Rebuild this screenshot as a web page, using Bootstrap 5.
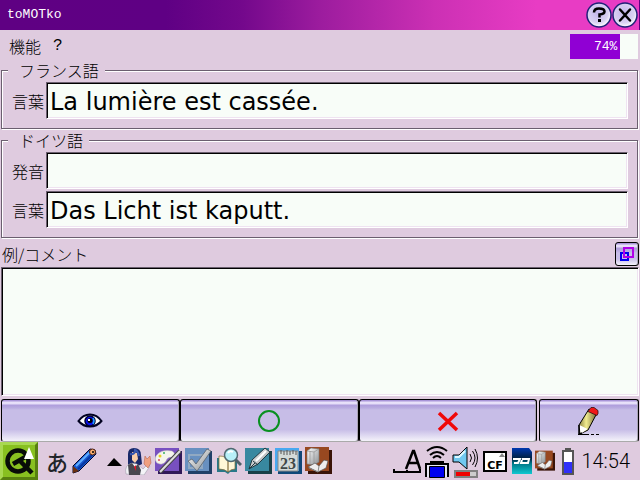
<!DOCTYPE html>
<html lang="ja">
<head>
<meta charset="utf-8">
<meta name="viewport" content="width=device-width, initial-scale=1">
<title>toMOTko</title>
<link href="https://cdn.jsdelivr.net/npm/bootstrap@5.3.0/dist/css/bootstrap.min.css" rel="stylesheet">
<style>
  :root { --paper: #dfcbdf; --field: #f8fdf8; --edge: #6b5f6f; --glow: #efe3f1; }
  body { background: var(--paper); color: #000; font: 16px/16px "Noto Sans CJK JP", sans-serif; font-weight: 300; }
  .pixel-type { font-family: "Liberation Mono", "Noto Sans CJK JP", monospace; font-size: 13px; font-weight: 400; }
  .title-strip { height: 30px; padding: 0 1px 0 7px; border-right: 1px solid #5f0083; color: #fff; background: linear-gradient(90deg, #5f0083 0%, #5f0084 26%, #74088c 38%, #9c1c9e 50%, #cc30b4 68%, #e83cc4 84%, #e83cc4 100%); }
  .round-btn { width: 26px; height: 26px; }
  .round-btn svg, .key-btn svg, .task-btn svg { display: block; }
  .menu-strip { height: 32px; padding: 0 2px 0 9px; }
  .menu-item { font-size: 16px; line-height: 16px; font-weight: 300; color: #000; }
  .score { width: 68px; height: 25px; border-radius: 0; background: var(--field); margin-top: 1px; }
  .score .progress-bar { background: #9000d4; text-align: right; padding-right: 3px; }
  .frame { border: 1px solid var(--edge); box-shadow: 1px 1px 0 #fff, inset 1px 1px 0 #fff; padding: 4px 9px 9px 6px; margin: 0 2px 3px 1px; }
  .frame legend { float: none; width: auto; margin: 0; padding: 0 6px 0 11px; font-size: 16px; line-height: 16px; background: var(--paper); }
  .frame-rows { gap: 2px; padding-left: 4px; }
  .frame label { width: 34px; }
  .sunken { background: var(--field); border: 1px solid; border-color: var(--edge) #fff #fff var(--edge); border-radius: 0; box-shadow: inset 1px 1px 0 #000, inset -1px -1px 0 var(--glow); outline: 0; color: #000; font: 24px/28px "DejaVu Sans", sans-serif; }
  .word { height: 37px; min-width: 0; padding: 2px 4px 0 3px; }
  .note-head { height: 26px; padding: 0 1px 0 2px; }
  .note { margin: 0 1px; padding: 4px; resize: none; min-height: 60px; }
  .key-btn { border: 1px solid #000; border-bottom-color: #aaa; border-radius: 3px; padding: 0; box-shadow: inset -1px 0 0 #aaa4b4; background: linear-gradient(#a894d8 0, #a894d8 1px, #e9e2fa 2px, #e4dcf8 4px, #ae9ddc 5px, #b9ace0 8px, #c7bde7 10px, #c7bde7 72%, #f4f2fa 100%); }
  .swap-btn { width: 24px; height: 24px; border-bottom-color: #000; }
  .key-row { height: 43px; padding: 0 1px; margin-top: 3px; }
  .wide-key { flex: 179 1 0; }
  .edit-key { flex: 99 1 0; margin-left: 2px; }
  .task-strip { height: 38px; padding-right: 10px; }
  .task-apps, .tray { gap: 3px; }
  .kana { font-size: 22px; line-height: 28px; font-weight: 500; width: 24px; }
  .clock { font: 300 20px/24px Roboto, sans-serif; }
</style>
</head>
<body>
<svg width="0" height="0" class="position-absolute" aria-hidden="true">
  <defs>
    <radialGradient id="orb" cx=".45" cy=".4" r=".6"><stop offset="0" stop-color="#c3b6ea"/><stop offset=".7" stop-color="#d9d2f2"/><stop offset="1" stop-color="#fff"/></radialGradient>
    <linearGradient id="steel" x2="1" y2="1"><stop offset="0" stop-color="#fff"/><stop offset="1" stop-color="#8a8f92"/></linearGradient>
    <linearGradient id="wood" x2="1"><stop offset="0" stop-color="#8a8040"/><stop offset=".4" stop-color="#f2ec90"/><stop offset="1" stop-color="#6d6530"/></linearGradient>
    <linearGradient id="sea" y2="1" x2="0"><stop offset="0" stop-color="#0038b0"/><stop offset=".4" stop-color="#002040"/><stop offset=".6" stop-color="#007888"/><stop offset="1" stop-color="#10c8d0"/></linearGradient>
    <g id="books"><path fill="#3a1408" d="M3 3h24v24H3z"/><path fill="#984820" d="M0 0h24v24H0z"/><path fill="url(#steel)" stroke="#777" stroke-width=".6" d="M2 4l4-3 8 1v13l-5 3-7-1z"/><path stroke="#999" stroke-width=".8" fill="none" d="M5 4v13M9 5v12M2 4l7 1 5-3"/><path fill="#eee" stroke="#555" stroke-width=".7" d="M3 20l7-4 4 3 5-6 4 1-2 7-8 4z"/><path stroke="#888" fill="none" d="M14 19l-1 6M4 21l9 4"/></g>
  </defs>
</svg>
<div class="d-flex flex-column min-vh-100">
  <header class="title-strip d-flex align-items-center">
    <h1 class="pixel-type m-0 me-auto">toMOTko</h1>
    <button type="button" class="btn p-0 border-0 round-btn" aria-label="Help">
      <svg width="26" height="26"><circle cx="13" cy="13" r="12" fill="url(#orb)" stroke="#202078" stroke-width="1.5"/><path d="M8 10.500Q8 6.500 13 6.500Q18.500 6.500 18.500 9.500Q18.500 12 13.500 12.500V15.500" fill="none" stroke="#000" stroke-width="2.500"/><path d="M12 17h3v3h-3z"/></svg>
    </button>
    <button type="button" class="btn p-0 border-0 round-btn" aria-label="Close">
      <svg width="26" height="26"><circle cx="13" cy="13" r="12" fill="url(#orb)" stroke="#202078" stroke-width="1.5"/><path d="M8 7.500L18 18.500M18 7.500L8 18.500" stroke="#000" stroke-width="2.500" stroke-linecap="round"/></svg>
    </button>
  </header>

  <nav class="menu-strip d-flex align-items-center">
    <button type="button" class="btn border-0 p-0 me-2 menu-item">機能</button>
    <button type="button" class="btn border-0 p-0 ms-1 pixel-type menu-item">?</button>
    <div class="progress score ms-auto" role="progressbar" aria-label="Score" aria-valuenow="74" aria-valuemin="0" aria-valuemax="100">
      <div class="progress-bar pixel-type" style="width: 74%">74%</div>
    </div>
  </nav>

  <main class="d-flex flex-column flex-grow-1">
    <fieldset class="frame">
      <legend>フランス語</legend>
      <div class="frame-rows d-flex flex-column">
        <div class="d-flex align-items-center"><label for="fr-word">言葉</label><input id="fr-word" class="sunken word flex-grow-1" type="text" value="La lumière est cassée."></div>
      </div>
    </fieldset>
    <fieldset class="frame">
      <legend>ドイツ語</legend>
      <div class="frame-rows d-flex flex-column">
        <div class="d-flex align-items-center"><label for="de-sound">発音</label><input id="de-sound" class="sunken word flex-grow-1" type="text"></div>
        <div class="d-flex align-items-center"><label for="de-word">言葉</label><input id="de-word" class="sunken word flex-grow-1" type="text" value="Das Licht ist kaputt."></div>
      </div>
    </fieldset>
    <div class="note-head d-flex align-items-center justify-content-between">
      <label for="note">例/コメント</label>
      <button type="button" class="key-btn swap-btn d-flex align-items-center justify-content-center" aria-label="Swap">
        <svg width="16" height="16" fill="none" stroke-width="2"><path stroke="#0000f0" d="M2 7h7v7H2z"/><path stroke="#b000e8" d="M5 2h9v9H5z"/></svg>
      </button>
    </div>
    <textarea id="note" class="sunken note flex-grow-1"></textarea>
    <div class="key-row d-flex">
      <button type="button" class="key-btn wide-key d-flex align-items-center justify-content-center" aria-label="Show">
        <svg width="26" height="16"><path d="M1.500 8Q6 1.500 13 1.500T24.500 8Q20 13.500 13 13.500T1.500 8z" fill="#fff" stroke="#000020" stroke-width="2"/><circle cx="13" cy="8" r="5" fill="#0810e8" stroke="#000030" stroke-width="1.500"/><path stroke="#20a0ff" stroke-width="1.500" fill="none" d="M16 5q2 3 0 6"/><circle cx="13" cy="7.500" r="2.500"/><path fill="#fff" d="M11 6h2v2h-2z"/></svg>
      </button>
      <button type="button" class="key-btn wide-key d-flex align-items-center justify-content-center" aria-label="Right">
        <svg width="24" height="24"><circle cx="12" cy="12" r="10" fill="none" stroke="#089020" stroke-width="2"/></svg>
      </button>
      <button type="button" class="key-btn wide-key d-flex align-items-center justify-content-center" aria-label="Wrong">
        <svg width="22" height="22"><path d="M2 3L20 20M20 3L2 20" stroke="#f00808" stroke-width="3.500"/></svg>
      </button>
      <button type="button" class="key-btn edit-key d-flex align-items-center justify-content-center" aria-label="Edit">
        <svg width="24" height="30"><path d="M2 19L12 3l8 4-9 17-8 4z" fill="url(#wood)" stroke="#000"/><path d="M12 4l2-2.500h3l4 3v3l-1 2-9-4z" fill="#f01818" stroke="#301010" stroke-width=".8"/><path d="M2.500 19l8 4-7 5z" fill="#fff"/><path d="M2 19v9l3-1" fill="none" stroke="#000" stroke-width="1.500"/><path d="M1 28.500h11M14 28.500h3M19 28.500h3" stroke="#000"/></svg>
      </button>
    </div>
  </main>

  <footer class="task-strip d-flex align-items-center">
    <button type="button" class="btn border-0 p-0 task-btn me-2" aria-label="Launcher">
      <svg width="38" height="38"><path fill="#88c020" d="M0 0h38v38H0z"/><path fill="#a8d850" d="M0 0h38l-3 3H3v32l-3 3z"/><path fill="#588010" d="M38 0v38H0l3-3h32V3z"/><circle cx="18" cy="19" r="10.500" fill="none" stroke="#080c08" stroke-width="4.500"/><path d="M13 22L27 14M20 19l12 12" stroke="#080c08" stroke-width="4.500"/><path d="M29 5l5 12H24z" fill="#fff"/></svg>
    </button>
    <button type="button" class="btn border-0 p-0 kana text-start">あ</button>
    <button type="button" class="btn border-0 p-0 task-btn" aria-label="Handwriting">
      <svg width="28" height="28"><path d="M3 19L20 2l5 1 1 4L9 24l-6 2z" fill="#1858d0" stroke="#000830"/><path d="M6 19L21 4" stroke="#60b0ff" stroke-width="2"/><path d="M8 22L24 6" stroke="#0838a0" stroke-width="2"/><path d="M3 19l6 5-6 2z" fill="#6a3010"/><circle cx="22.500" cy="5" r="3" fill="#f8b070" stroke="#502010"/><circle cx="23" cy="5" r="1"/></svg>
    </button>
    <button type="button" class="btn border-0 p-0 task-btn ms-2" aria-label="More">
      <svg width="18" height="28"><path d="M1 19L8 11l8 8z"/></svg>
    </button>
    <div class="d-flex task-apps">
      <button type="button" class="btn border-0 p-0 task-btn" aria-label="Contacts"><svg width="28" height="28"><path d="M4 18V7q0-6 6-6 7 0 7 7l1 9-4 2H5z" fill="#182868"/><path d="M8 5l5 1 1 6-3 4-3-3z" fill="#f8cda8"/><path d="M6 7q5 1 5-4 3 1 4 6" stroke="#3858b0" stroke-width="2" fill="none"/><path d="M2 27q-2-9 6-11l5 1 6 5 5-5 2 2-6 9z" fill="#f4f4f8" stroke="#9090a0" stroke-width=".5"/><path d="M4 18l4-2 3 4 3-3 3 6-1 5H5z" fill="#484850"/><path d="M20 17l1-8 2 3 3-3 1 7-3 5z" fill="#f0a080" stroke="#b05840" stroke-width=".5"/><path d="M10 20l2-2v6z" fill="#e01828"/></svg></button>
      <button type="button" class="btn border-0 p-0 task-btn" aria-label="Paint"><svg width="27" height="28"><path fill="#301858" d="M3 4h24v23H3z"/><path fill="#7850c0" d="M0 1h24v23H0z"/><path d="M1 9q5-7 16-5 5 3 0 6-5 0-6 4-3 5-9 2-3-3-1-7z" fill="#f4f4ec" stroke="#bbb" stroke-width=".5"/><circle cx="5" cy="9" r="1.500" fill="#e8d020"/><circle cx="9" cy="6" r="1" fill="#38b060"/><circle cx="4" cy="13" r="1" fill="#d85060"/><path d="M5 25L25 4" stroke="#444" stroke-width="4"/><path d="M5 25L25 4" stroke="#ddd" stroke-width="2"/></svg></button>
      <button type="button" class="btn border-0 p-0 task-btn" aria-label="To do"><svg width="27" height="28"><path fill="#204068" d="M3 4h24v23H3z"/><path fill="#6890c0" d="M0 1h24v23H0z"/><path d="M4 8h13v13H4z" fill="none" stroke="#91a9c2" stroke-width="2"/><path d="M3 14l4-2 4 5L22 2l4 2-14 20z" fill="url(#steel)" stroke="#505860" stroke-width=".7"/></svg></button>
      <button type="button" class="btn border-0 p-0 task-btn" aria-label="Dictionary"><svg width="27" height="28"><path fill="#287888" d="M2 11h9l3 2 3-2h5v14h-7l-2 2-3-2H2z"/><path fill="#fff8d8" stroke="#806838" stroke-width=".7" d="M4 9q7 0 9 4v12q-3-3-9-3zM13 13q3-2 7-2v11q-4 0-7 3z"/><circle cx="16" cy="8" r="6.500" fill="#b8f0f8" stroke="#506870" stroke-width="1.500"/><path d="M13 6q2-3 5-1" stroke="#fff" stroke-width="2" fill="none"/><path d="M21 13l5 5" stroke="#506068" stroke-width="3"/></svg></button>
      <button type="button" class="btn border-0 p-0 task-btn" aria-label="Editor"><svg width="27" height="28"><path fill="#184048" d="M3 4h24v23H3z"/><path fill="#3888a0" d="M0 1h24v23H0z"/><path d="M4 22l3-9L20 1l5 4-12 12z" fill="url(#steel)" stroke="#203840"/><path d="M8 14l5 4M4 22l6-6" stroke="#203840"/><path d="M11 14L21 4" stroke="#fff" stroke-width="2"/></svg></button>
      <button type="button" class="btn border-0 p-0 task-btn" aria-label="Calendar"><svg width="27" height="28"><path fill="#104878" d="M3 4h24v23H3z"/><path fill="#48a8f0" d="M0 1h24v23H0z"/><path fill="#d4dad8" stroke="#888" d="M3 4h20v20H3z"/><path d="M6 3v4M9 4v4M12 3v5M15 4v4M18 3v4M21 4v4" stroke="#555"/><text x="13" y="22" text-anchor="middle" font-family="Liberation Serif, serif" font-weight="700" font-size="16" fill="#404848">23</text></svg></button>
      <button type="button" class="btn border-0 p-0 task-btn" aria-label="Library"><svg width="27" height="28"><use href="#books"/></svg></button>
    </div>
    <div class="tray d-flex align-items-center ms-auto">
      <svg width="29" height="28" role="img" aria-label="Input mode"><path d="M13 22L20 4h1l6 18M16 16h9" fill="none" stroke="#000" stroke-width="2.500"/><path d="M1 22v3h26v-3M14 23v2" fill="none" stroke="#000" stroke-width="2"/></svg>
      <svg width="24" height="34" role="img" aria-label="Network"><path d="M2 7q10-8 20 0M5 11q7-6 14 0M8 14q4-4 8 0" fill="none" stroke="#000" stroke-width="2"/><path d="M5 17h14v3H5z"/><path d="M1 33V20h22v13" fill="#e8e8f4" stroke="#000" stroke-width="2"/><path fill="#0000f0" stroke="#000" d="M4.500 22.500h15v11h-15z"/></svg>
      <svg width="28" height="34" role="img" aria-label="Volume"><path d="M1 11h6l8-8v22l-8-7H1z" fill="#70c8f0" stroke="#000"/><path d="M3 13h4l6-6" stroke="#e0f8ff" stroke-width="2" fill="none"/><path d="M18 10q3 4 0 8M20.500 7q5 7 0 14M23 5q5 9 0 18" fill="none" stroke="#000"/><path fill="#808080" d="M2 26h24v8H2z"/><path fill="#f00000" d="M4 28h14v4H4z"/><path fill="#ccc" d="M18 28h6v4h-6z"/></svg>
      <svg width="26" height="28" role="img" aria-label="CF card"><path fill="#fff" stroke="#000" stroke-width="2" d="M1 5h22v19H1z"/><path fill="#888" d="M19 6l3 4h-6z"/><text x="12" y="22" text-anchor="middle" font-family="DejaVu Sans, sans-serif" font-weight="700" font-size="11">CF</text></svg>
      <svg width="20" height="28" role="img" aria-label="SD card"><path d="M0 1h17l3 4v22H0z" fill="url(#sea)"/><path d="M1 12h7l-2 4H2M10 12h7l-1 4h-7l1-3" stroke="#fff" stroke-width="2" fill="none"/></svg>
      <svg class="me-1" width="20" height="22" viewBox="0 0 27 28" role="img" aria-label="Storage"><use href="#books"/></svg>
      <svg class="me-1" width="12" height="28" role="img" aria-label="Battery"><path fill="#555" d="M3 1h6v2h3v25H0V3h3z"/><path fill="#fff" d="M2 5h8v10H2z"/><path fill="#3030f8" d="M2 15h8v11H2z"/></svg>
      <time class="clock">14:54</time>
    </div>
  </footer>
</div>
<script src="https://cdn.jsdelivr.net/npm/bootstrap@5.3.0/dist/js/bootstrap.bundle.min.js"></script>
</body>
</html>
